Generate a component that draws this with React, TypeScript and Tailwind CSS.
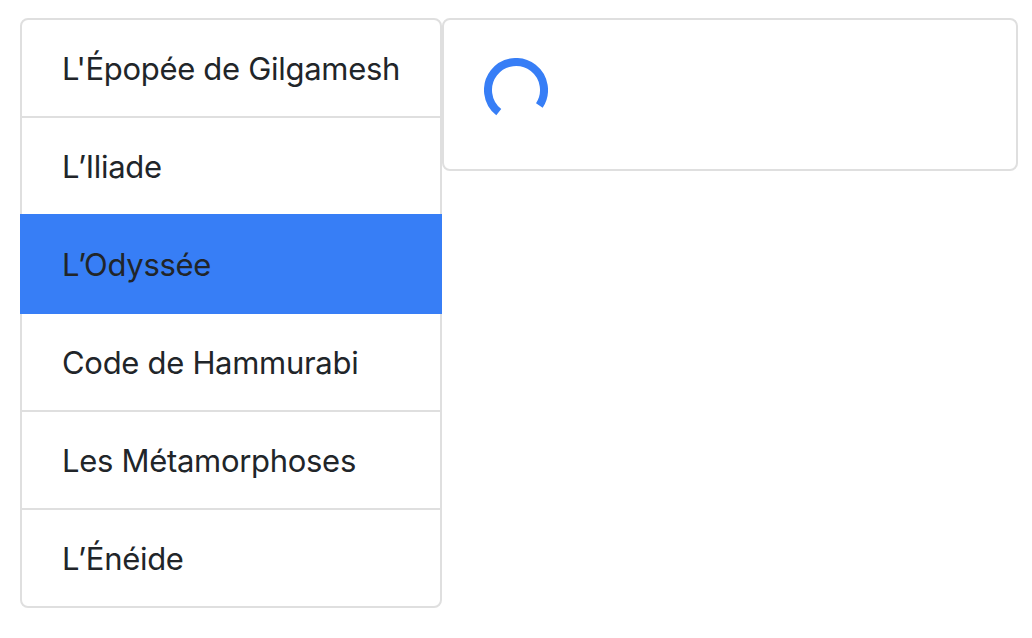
const books = [
  "L'Épopée de Gilgamesh",
  "L’Iliade",
  "L’Odyssée",
  "Code de Hammurabi",
  "Les Métamorphoses",
  "L’Énéide",
];

function Spinner() {
  // arc with a gap at the bottom, like a spinner frozen mid-turn
  const r = 28;
  const c = 2 * Math.PI * r;
  const gap = (95 / 360) * c;
  return (
    <svg width="64" height="64" viewBox="0 0 64 64" className="block">
      <circle
        cx="32"
        cy="32"
        r={r}
        fill="none"
        stroke="#377ef6"
        strokeWidth="8"
        strokeDasharray={`${c - gap} ${gap}`}
        transform="rotate(128 32 32)"
      />
    </svg>
  );
}

export default function App() {
  const active = 2;
  return (
    <div
      className="flex items-start pl-5 pt-[18px] bg-white min-h-[638px] text-[#212529]"
      style={{ fontFamily: "Inter, 'Noto Sans', sans-serif" }}
    >
      <div className="flex flex-col w-[422px]">
        {books.map((b, i) => (
          <div
            key={b}
            className={[
              "relative border-2 px-10 pt-[25px] pb-[23px] text-[31px] leading-[48px] tracking-[-0.3px] whitespace-nowrap",
              i > 0 ? "-mt-[2px]" : "rounded-t-lg",
              i === books.length - 1 ? "rounded-b-lg" : "",
              i === active ? "bg-[#377ef6] border-[#377ef6] z-10" : "bg-white border-[#dfdfdf]",
            ].join(" ")}
          >
            {b}
          </div>
        ))}
      </div>
      <div className="w-[576px] h-[153px] border-2 border-[#dfdfdf] rounded-lg pl-10 pt-[38px]">
        <Spinner />
      </div>
    </div>
  );
}
